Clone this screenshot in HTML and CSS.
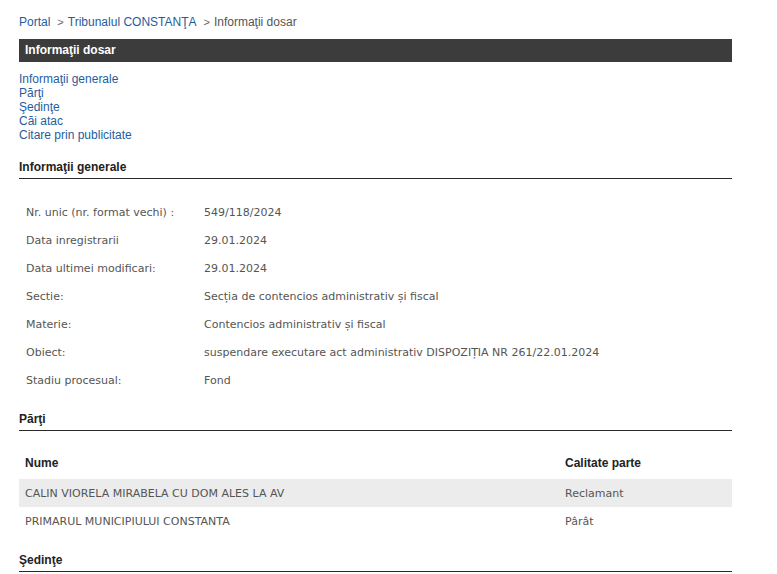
FILE: index.html
```html
<!DOCTYPE html>
<html lang="ro">
<head>
<meta charset="utf-8">
<title>Informaţii dosar</title>
<link rel="stylesheet" href="styles.css">
</head>
<body>
<div class="page">
  <div class="crumbs">
    <a href="#">Portal</a><span class="sep">&gt;</span><a href="#">Tribunalul CONSTANŢA</a><span class="sep">&gt;</span><span class="cur">Informaţii dosar</span>
  </div>
  <div class="titlebar">Informaţii dosar</div>
  <ul class="toc">
    <li><a href="#">Informaţii generale</a></li>
    <li><a href="#">Părţi</a></li>
    <li><a href="#">Şedinţe</a></li>
    <li><a href="#">Căi atac</a></li>
    <li><a href="#">Citare prin publicitate</a></li>
  </ul>

  <h3 class="section">Informaţii generale</h3>
  <table class="info">
    <tr><td class="lbl">Nr. unic (nr. format vechi) :</td><td>549/118/2024</td></tr>
    <tr><td class="lbl">Data inregistrarii</td><td>29.01.2024</td></tr>
    <tr><td class="lbl">Data ultimei modificari:</td><td>29.01.2024</td></tr>
    <tr><td class="lbl">Sectie:</td><td>Secția de contencios administrativ și fiscal</td></tr>
    <tr><td class="lbl">Materie:</td><td>Contencios administrativ și fiscal</td></tr>
    <tr><td class="lbl">Obiect:</td><td>suspendare executare act administrativ DISPOZIȚIA NR 261/22.01.2024</td></tr>
    <tr><td class="lbl">Stadiu procesual:</td><td>Fond</td></tr>
  </table>

  <h3 class="section">Părţi</h3>
  <table class="parties">
    <thead>
      <tr><th class="c1">Nume</th><th>Calitate parte</th></tr>
    </thead>
    <tbody>
      <tr class="odd"><td>CALIN VIORELA MIRABELA CU DOM ALES LA AV</td><td>Reclamant</td></tr>
      <tr><td>PRIMARUL MUNICIPIULUI CONSTANTA</td><td>Pârât</td></tr>
    </tbody>
  </table>

  <h3 class="section last">Şedinţe</h3>
</div>
</body>
</html>
```

FILE: styles.css
```css
html, body {
  margin: 0;
  padding: 0;
  background: #fff;
}
body {
  font-family: "Liberation Sans", Arial, sans-serif;
  font-size: 12px;
  color: #333;
}
.page {
  width: 713px;
  padding: 15px 19px 0 19px;
}
a {
  color: #1f5d9e;
  text-decoration: none;
}
.crumbs {
  line-height: 14px;
  height: 14px;
}
.crumbs .sep {
  color: #666;
  margin: 0 4px 0 7px;
  font-size: 11px;
}
.crumbs .cur {
  color: #555;
}
.titlebar {
  margin-top: 10px;
  height: 23px;
  line-height: 23px;
  background: #3c3c3c;
  color: #fff;
  font-weight: bold;
  font-size: 12px;
  padding-left: 6px;
}
.toc {
  list-style: none;
  margin: 10px 0 0 0;
  padding: 0;
}
.toc li {
  line-height: 14px;
  height: 14px;
}
.section {
  margin: 18px 0 0 0;
  font-size: 12px;
  font-weight: bold;
  color: #222;
  line-height: 14px;
  padding-bottom: 4px;
  border-bottom: 1px solid #2a2a2a;
}
table {
  border-collapse: collapse;
  width: 713px;
}
.info {
  margin-top: 19px;
  font-family: "DejaVu Sans", Tahoma, sans-serif;
  font-size: 11px;
  color: #555;
}
.info td {
  height: 28px;
  padding: 0;
  vertical-align: middle;
  white-space: nowrap;
}
.info td.lbl {
  width: 178px;
  padding-left: 7px;
}
.parties {
  margin-top: 20px;
}
.parties th {
  text-align: left;
  font-weight: bold;
  color: #222;
  height: 28px;
  padding: 0 0 4px 6px;
  vertical-align: middle;
  box-sizing: border-box;
}
.parties th.c1 {
  width: 540px;
}
.parties td {
  height: 28px;
  padding: 0 0 0 6px;
  font-family: "DejaVu Sans", Tahoma, sans-serif;
  font-size: 11px;
  color: #555;
}
.parties tr.odd td {
  background: #ececec;
}
```
